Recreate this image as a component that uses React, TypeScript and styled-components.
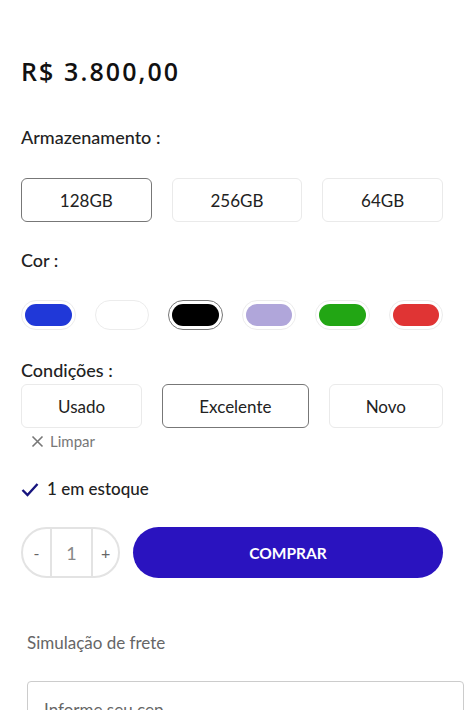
import styled, { createGlobalStyle } from 'styled-components'

const GlobalStyle = createGlobalStyle`
  body {
    margin: 0;
    background: #fff;
    font-family: Lato, 'Open Sans', sans-serif;
    color: #222;
  }
`

const Styled = {
  Root: styled.div`
    padding: 0 32px 0 21px;
    width: 475px;
    box-sizing: border-box;
  `,
  Price: styled.div`
    margin-top: 55px;
    font-family: 'Open Sans', sans-serif;
    font-weight: 600;
    font-size: 25px;
    line-height: 32px;
    letter-spacing: 2.1px;
    color: #111;
  `,
  Label: styled.div<{ $top: number }>`
    margin-top: ${({ $top }) => $top}px;
    font-size: 18px;
    line-height: 24px;
    font-weight: 500;
    color: #222;
  `,
  Options: styled.div<{ $top: number }>`
    display: flex;
    gap: 20px;
    margin-top: ${({ $top }) => $top}px;
  `,
  Option: styled.button<{ $active?: boolean }>`
    flex: 1 1 auto;
    height: 44px;
    padding: 0 16px;
    background: #fff;
    border: 1px solid ${({ $active }) => ($active ? '#777' : '#eaeaea')};
    border-radius: 6px;
    font-family: Lato, sans-serif;
    font-size: 17px;
    color: #222;
  `,
  Swatches: styled.div`
    display: flex;
    gap: 19px;
    margin-top: 28px;
  `,
  Swatch: styled.div<{ $active?: boolean }>`
    flex: 1;
    height: 30px;
    box-sizing: border-box;
    padding: 3px;
    border: 1px solid ${({ $active }) => ($active ? '#777' : '#ececec')};
    border-radius: 999px;
    display: flex;
  `,
  Fill: styled.span<{ $color: string }>`
    flex: 1;
    border-radius: 999px;
    background: ${({ $color }) => $color};
  `,
  Clear: styled.div`
    display: flex;
    align-items: center;
    gap: 6px;
    margin: 3px 0 0 10px;
    font-size: 15px;
    line-height: 20px;
    color: #777;
  `,
  Stock: styled.div`
    display: flex;
    align-items: center;
    gap: 8px;
    margin-top: 26px;
    font-size: 17px;
    line-height: 24px;
    font-weight: 500;
    color: #222;
  `,
  BuyRow: styled.div`
    display: flex;
    gap: 13px;
    margin-top: 26px;
    height: 51px;
  `,
  Qty: styled.div`
    width: 99px;
    box-sizing: border-box;
    border: 2px solid #e3e3e3;
    border-radius: 999px;
    display: flex;
    color: #777;
  `,
  QtyCell: styled.div<{ $w: number; $divider?: boolean }>`
    width: ${({ $w }) => $w}px;
    display: flex;
    align-items: center;
    justify-content: center;
    font-size: ${({ $divider }) => ($divider ? '18px' : '16px')};
    color: ${({ $divider }) => ($divider ? '#888' : '#666')};
    border-left: ${({ $divider }) => ($divider ? '2px solid #e3e3e3' : 'none')};
    border-right: ${({ $divider }) => ($divider ? '2px solid #e3e3e3' : 'none')};
  `,
  Buy: styled.button`
    flex: 1;
    border: none;
    border-radius: 26px;
    background: #2a13bf;
    color: #fff;
    font-family: Lato, sans-serif;
    font-weight: 700;
    font-size: 15.5px;
  `,
  Shipping: styled.div`
    margin: 53px 0 0 6px;
    font-size: 17px;
    line-height: 24px;
    color: #666;
  `,
  CepInput: styled.input`
    display: block;
    margin: 26px 0 0 6px;
    width: 437px;
    height: 56px;
    box-sizing: border-box;
    border: 1px solid #ccc;
    border-radius: 4px;
    padding: 0 16px;
    font-family: Lato, sans-serif;
    font-size: 17px;
    &::placeholder {
      color: #666;
    }
  `,
}

const storage = ['128GB', '256GB', '64GB']
const colors = ['#2038d8', '#ffffff', '#000000', '#b0a6da', '#22a614', '#e03434']
const conditions = ['Usado', 'Excelente', 'Novo']

const App = () => {
  return (
    <>
      <GlobalStyle />
      <Styled.Root>
        <Styled.Price>R$ 3.800,00</Styled.Price>

        <Styled.Label $top={38}>Armazenamento :</Styled.Label>
        <Styled.Options $top={29}>
          {storage.map((s, i) => (
            <Styled.Option key={s} $active={i === 0}>{s}</Styled.Option>
          ))}
        </Styled.Options>

        <Styled.Label $top={26}>Cor :</Styled.Label>
        <Styled.Swatches>
          {colors.map((c, i) => (
            <Styled.Swatch key={c} $active={i === 2}>
              <Styled.Fill $color={c} />
            </Styled.Swatch>
          ))}
        </Styled.Swatches>

        <Styled.Label $top={28}>Condições :</Styled.Label>
        <Styled.Options $top={2}>
          {conditions.map((s, i) => (
            <Styled.Option key={s} $active={i === 1}>{s}</Styled.Option>
          ))}
        </Styled.Options>
        <Styled.Clear>
          <svg width="13" height="13" viewBox="0 0 13 13">
            <path d="M1.5 1.5L11.5 11.5M11.5 1.5L1.5 11.5" stroke="#777" strokeWidth="1.6" />
          </svg>
          Limpar
        </Styled.Clear>

        <Styled.Stock>
          <svg width="18" height="15" viewBox="0 0 18 15">
            <path d="M1.5 8L6.5 13L16.5 2" fill="none" stroke="#17157e" strokeWidth="2.4" />
          </svg>
          1 em estoque
        </Styled.Stock>

        <Styled.BuyRow>
          <Styled.Qty>
            <Styled.QtyCell $w={28}>-</Styled.QtyCell>
            <Styled.QtyCell $w={41} $divider>1</Styled.QtyCell>
            <Styled.QtyCell $w={26}>+</Styled.QtyCell>
          </Styled.Qty>
          <Styled.Buy>COMPRAR</Styled.Buy>
        </Styled.BuyRow>

        <Styled.Shipping>Simulação de frete</Styled.Shipping>
        <Styled.CepInput placeholder="Informe seu cep" />
      </Styled.Root>
    </>
  )
}

export default App
